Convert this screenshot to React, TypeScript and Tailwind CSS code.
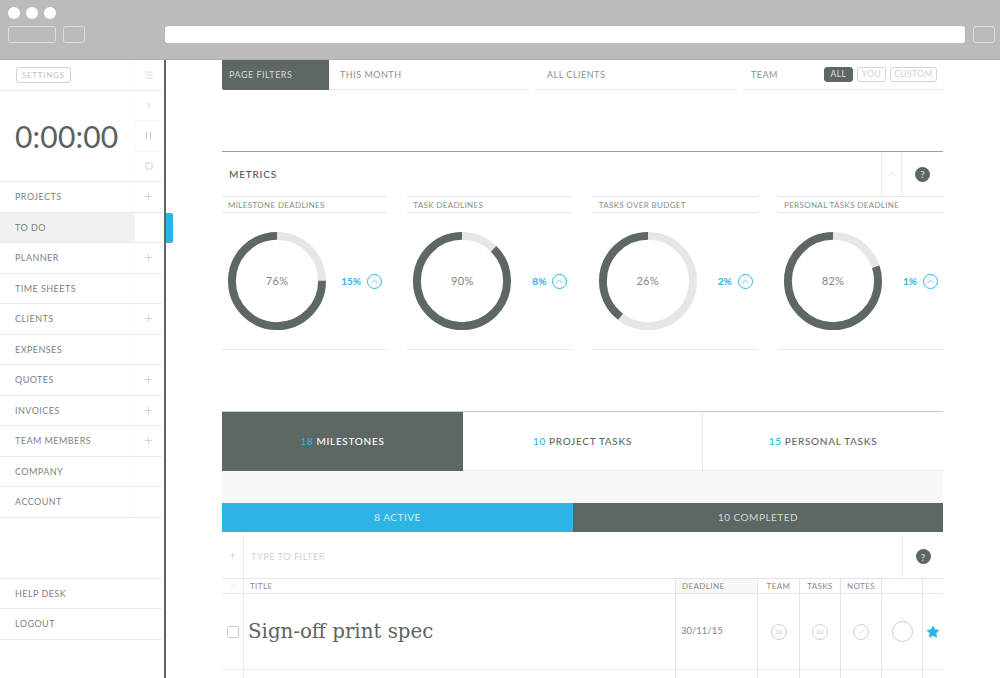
import React from "react";
import { ChevronRight, ChevronUp, Check, Menu, Plus, Square, Star } from "lucide-react";

const sansFont = "font-['Lato','Open_Sans',sans-serif]";

const navItems = [
  { label: "PROJECTS", plus: true },
  { label: "TO DO", active: true },
  { label: "PLANNER", plus: true },
  { label: "TIME SHEETS" },
  { label: "CLIENTS", plus: true },
  { label: "EXPENSES" },
  { label: "QUOTES", plus: true },
  { label: "INVOICES", plus: true },
  { label: "TEAM MEMBERS", plus: true },
  { label: "COMPANY" },
  { label: "ACCOUNT" },
];

// arc is the share drawn in the picture, which differs from the printed value
const metrics = [
  { label: "MILESTONE DEADLINES", value: 76, arc: 75, delta: "15%" },
  { label: "TASK DEADLINES", value: 90, arc: 87.5, delta: "8%" },
  { label: "TASKS OVER BUDGET", value: 26, arc: 39.5, delta: "2%" },
  { label: "PERSONAL TASKS DEADLINE", value: 82, arc: 80, delta: "1%" },
];

const NavRow = ({ label, plus, active, plain }: { label: string; plus?: boolean; active?: boolean; plain?: boolean }) => (
  <div className="flex h-[30.5px] w-[162px] border-b border-[#e9e9e9]">
    <div className={`flex w-[134px] items-center pl-[15px] text-[9px] tracking-[0.45px] text-[#7b8280] ${active ? "bg-[#f1f1f1]" : ""}`}>
      {label}
    </div>
    <div className={`flex flex-1 items-center justify-center ${plain ? "" : "border-l border-[#f7f7f7]"}`}>
      {plus && <Plus className="h-[11px] w-[11px] text-[#c4c4c4]" strokeWidth={1.5} />}
    </div>
  </div>
);

const Sidebar = () => (
  <aside className="relative flex w-[166px] shrink-0 flex-col border-r-2 border-[#5d6764]">
    <div className="flex h-[31px] w-[162px] shrink-0 border-b border-[#e9e9e9]">
      <div className="flex flex-1 items-center pl-[16px]">
        <span className="rounded-[3px] border border-[#d2d2d2] px-[5px] py-[1.5px] text-[8px] leading-[11px] tracking-[0.7px] text-[#c2c2c2]">
          SETTINGS
        </span>
      </div>
      <div className="flex w-[28px] items-center justify-center border-l border-[#f7f7f7]">
        <Menu className="h-[10px] w-[10px] text-[#c4c4c4]" strokeWidth={1.5} />
      </div>
    </div>
    <div className="flex h-[91px] w-[162px] shrink-0 border-b border-[#e9e9e9]">
      <div className="flex w-[134px] items-center pl-[15px] text-[30px] tracking-[0.2px] text-[#59625f]">0:00:00</div>
      <div className="flex flex-1 flex-col border-l border-[#f7f7f7]">
        <div className="flex flex-1 items-center justify-center border-b border-[#f7f7f7]">
          <ChevronRight className="h-[11px] w-[11px] text-[#bdbdbd]" strokeWidth={1.5} />
        </div>
        <div className="flex flex-1 items-center justify-center gap-[3px] border-b border-[#f7f7f7]">
          <span className="h-[7px] w-px bg-[#c4c4c4]" />
          <span className="h-[7px] w-px bg-[#c4c4c4]" />
        </div>
        <div className="flex flex-1 items-center justify-center">
          <Square className="h-[8px] w-[8px] text-[#a8a8a8]" strokeWidth={1.5} />
        </div>
      </div>
    </div>
    {navItems.map((item) => (
      <NavRow key={item.label} {...item} />
    ))}
    <div className="h-[61px] w-[162px] shrink-0 border-b border-[#e9e9e9]" />
    <NavRow label="HELP DESK" plain />
    <NavRow label="LOGOUT" plain />
    {/* blue marker sticks out of the sidebar next to the active row */}
    <div className="absolute left-[166px] top-[153px] h-[30px] w-[7px] rounded-r-[2px] bg-[#2cb5e4]" />
  </aside>
);

const FilterBar = () => (
  <div className="flex h-[30px] text-[9px] tracking-[0.5px] text-[#8a908e]">
    <div className="flex w-[107px] items-center rounded-bl-[2px] bg-[#5d6764] pl-[7px] text-[#d3d8d6]">PAGE FILTERS</div>
    <div className="flex w-[199px] items-center border-b border-[#e8e8e8] pl-[11px]">THIS MONTH</div>
    <div className="ml-[7px] flex w-[200px] items-center border-b border-[#e8e8e8] pl-[12px]">ALL CLIENTS</div>
    <div className="ml-[8px] flex flex-1 items-center justify-between border-b border-[#e8e8e8] pl-[8px] pr-[6px]">
      <span>TEAM</span>
      <div className="flex gap-[4px] text-[8.5px] leading-[13px]">
        <span className="w-[29px] rounded-[3px] border border-[#5d6764] bg-[#5d6764] text-center text-[#dfe3e2]">ALL</span>
        <span className="w-[29px] rounded-[3px] border border-[#d4d4d4] text-center text-[#d0d0d0]">YOU</span>
        <span className="w-[47px] rounded-[3px] border border-[#d4d4d4] text-center text-[#d0d0d0]">CUSTOM</span>
      </div>
    </div>
  </div>
);

const HelpBadge = () => (
  <span className="flex h-[15px] w-[15px] items-center justify-center rounded-full bg-[#5d6764] text-[10px] font-bold leading-none text-[#c9cfcd]">?</span>
);

const Donut = ({ value, arc }: { value: number; arc: number }) => {
  const r = 46;
  const length = 2 * Math.PI * r;
  return (
    <div className="relative h-[98px] w-[98px]">
      <svg viewBox="0 0 100 100" className="h-full w-full -rotate-90">
        <circle cx="50" cy="50" r={r} fill="none" stroke="#e6e6e6" strokeWidth="8" />
        {/* the dark arc runs anticlockwise from twelve o'clock */}
        <circle
          cx="50"
          cy="50"
          r={r}
          fill="none"
          stroke="#5d6764"
          strokeWidth="8"
          strokeDasharray={`${(length * arc) / 100} ${length}`}
          transform="translate(0 100) scale(1 -1)"
        />
      </svg>
      <span className="absolute inset-0 flex items-center justify-center text-[11px] tracking-[0.3px] text-[#7f8583]">{value}%</span>
    </div>
  );
};

const MetricCard = ({ label, value, arc, delta }: { label: string; value: number; arc: number; delta: string }) => (
  <div className="flex h-[154px] w-[165px] flex-col border-b border-[#e8e8e8]">
    <div className="flex h-[17px] items-center border-y border-[#e8e8e8] pl-[6px] text-[8px] tracking-[0.35px] text-[#868c8a]">{label}</div>
    <div className="flex flex-1 items-center justify-between pl-[6px] pr-[5px]">
      <Donut value={value} arc={arc} />
      <div className="flex items-center gap-[6px] text-[10px] font-bold text-[#2cb5e4]">
        {delta}
        <span className="flex h-[15px] w-[15px] items-center justify-center rounded-full border border-[#2cb5e4]">
          <ChevronUp className="h-[11px] w-[11px]" strokeWidth={1.5} />
        </span>
      </div>
    </div>
  </div>
);

const Metrics = () => (
  <section className="mt-[61px] border-t border-[#9aa3a0]">
    <div className="flex h-[44px]">
      <div className="flex flex-1 items-center pl-[7px] text-[10px] font-medium tracking-[0.8px] text-[#4f5856]">METRICS</div>
      <div className="flex w-[21px] items-center justify-center border-x border-[#ebebeb]">
        <ChevronUp className="h-[12px] w-[12px] text-[#c9c9c9]" strokeWidth={1.5} />
      </div>
      <div className="flex w-[41px] items-center justify-center"><HelpBadge /></div>
    </div>
    <div className="flex justify-between">
      {metrics.map((m) => (
        <MetricCard key={m.label} {...m} />
      ))}
    </div>
  </section>
);

const Tabs = () => (
  <div className="mt-[61px] grid h-[60px] grid-cols-[241px_240px_240px] border-t border-[#c9c9c9] text-[10px] font-medium tracking-[0.7px]">
    <div className="flex items-center justify-center gap-[3px] bg-[#5d6764] text-white">
      <span className="text-[#2cb5e4]">18</span> MILESTONES
    </div>
    <div className="flex items-center justify-center gap-[3px] border-r border-b border-[#e8e8e8] text-[#5d6764]">
      <span className="text-[#2cb5e4]">10</span> PROJECT TASKS
    </div>
    <div className="flex items-center justify-center gap-[3px] border-b border-[#e8e8e8] text-[#5d6764]">
      <span className="text-[#2cb5e4]">15</span> PERSONAL TASKS
    </div>
  </div>
);

const RoundIcon = ({ children }: { children: React.ReactNode }) => (
  <span className="flex h-[16px] w-[16px] items-center justify-center rounded-full border border-[#cfcfcf] text-[6px] text-[#c4c4c4]">{children}</span>
);

const columns = "grid grid-cols-[21px_432px_82px_42px_41px_41px_41px_21px]";

const TodoTable = () => (
  <div>
    <div className="flex h-[47px] border-b border-[#e4e4e4]">
      <div className="flex w-[21px] items-center justify-center">
        <Plus className="h-[9px] w-[9px] text-[#bdbdbd]" strokeWidth={1.5} />
      </div>
      <div className="mt-[3px] flex flex-1 items-center border-l border-[#ececec] pl-[7px] text-[9px] tracking-[0.6px] text-[#d0d0d0]">TYPE TO FILTER</div>
      <div className="mt-[3px] flex w-[41px] items-center justify-center border-l border-[#ececec]"><HelpBadge /></div>
    </div>
    <div className={`${columns} h-[15px] border-b border-[#e4e4e4] text-[8px] tracking-[0.4px] text-[#868c8a]`}>
      <div className="flex items-center justify-center"><Check className="h-[8px] w-[8px] text-[#c4c4c4]" strokeWidth={1.5} /></div>
      <div className="flex items-center border-l border-[#ececec] pl-[6px]">TITLE</div>
      <div className="flex items-center border-l border-[#e4e4e4] bg-[#f8f8f8] pl-[6px]">DEADLINE</div>
      <div className="flex items-center justify-center border-l border-[#e4e4e4]">TEAM</div>
      <div className="flex items-center justify-center border-l border-[#e4e4e4]">TASKS</div>
      <div className="flex items-center justify-center border-l border-[#e4e4e4]">NOTES</div>
      <div className="border-l border-[#e4e4e4]" />
      <div className="border-l border-[#e4e4e4]" />
    </div>
    <div className={`${columns} h-[76px] border-b border-[#ececec]`}>
      <div className="flex items-center justify-center"><span className="h-[12px] w-[12px] rounded-[2px] border border-[#cfcfcf]" /></div>
      <div className="flex items-center border-l border-[#ececec] pl-[4px] font-['DejaVu_Serif',serif] text-[19.8px] text-[#5d6360]">Sign-off print spec</div>
      <div className="flex items-center border-l border-[#e4e4e4] pl-[5px] text-[9.5px] text-[#7f8583]">30/11/15</div>
      <div className="flex items-center justify-center border-l border-[#e4e4e4]"><RoundIcon>10</RoundIcon></div>
      <div className="flex items-center justify-center border-l border-[#e4e4e4]"><RoundIcon>10</RoundIcon></div>
      <div className="flex items-center justify-center border-l border-[#e4e4e4]">
        <RoundIcon><Check className="h-[8px] w-[8px]" strokeWidth={1.5} /></RoundIcon>
      </div>
      <div className="flex items-center justify-center border-l border-[#e4e4e4]">
        <span className="h-[21px] w-[21px] rounded-full border border-[#c9c9c9]" />
      </div>
      <div className="flex items-center justify-center border-l border-[#e4e4e4]">
        <Star className="h-[14px] w-[14px] text-[#2cb5e4]" fill="currentColor" strokeWidth={1} />
      </div>
    </div>
    <div className={`${columns} h-[10px]`}>
      <div />
      <div className="border-l border-[#ececec]" />
      <div className="border-l border-[#e4e4e4]" />
      <div className="border-l border-[#e4e4e4]" />
      <div className="border-l border-[#e4e4e4]" />
      <div className="border-l border-[#e4e4e4]" />
      <div className="border-l border-[#e4e4e4]" />
      <div className="border-l border-[#e4e4e4]" />
    </div>
  </div>
);

export default function App() {
  return (
    <div className={`flex h-[678px] w-[1000px] flex-col overflow-hidden bg-white ${sansFont}`}>
      <header className="flex h-[60px] shrink-0 flex-col border-b border-[#adadad] bg-[#bbbbbb] pl-[8px] pr-[5px] pt-[7px]">
        <div className="flex gap-[6px]">
          <span className="h-[12px] w-[12px] rounded-full bg-white" />
          <span className="h-[12px] w-[12px] rounded-full bg-white" />
          <span className="h-[12px] w-[12px] rounded-full bg-white" />
        </div>
        <div className="mt-[7px] flex h-[17px] items-stretch">
          <span className="w-[48px] rounded-[3px] border border-[#dcdcdc]" />
          <span className="ml-[7px] w-[22px] rounded-[3px] border border-[#dcdcdc]" />
          <span className="ml-[80px] w-[800px] rounded-[3px] bg-white" />
          <span className="ml-[8px] w-[22px] rounded-[3px] border border-[#dcdcdc]" />
        </div>
      </header>
      <div className="flex min-h-0 flex-1">
        <Sidebar />
        <main className="ml-[56px] w-[721px] shrink-0">
          <FilterBar />
          <Metrics />
          <Tabs />
          <div className="h-[32px] bg-[#f8f8f8]" />
          <div className="flex h-[29px] text-[10px] tracking-[0.5px] text-[#d9e9ee]">
            <div className="flex w-[351px] items-center justify-center bg-[#2cb5e4]">8 ACTIVE</div>
            <div className="flex flex-1 items-center justify-center bg-[#5d6764] text-[#d3d8d6]">10 COMPLETED</div>
          </div>
          <TodoTable />
        </main>
      </div>
    </div>
  );
}
